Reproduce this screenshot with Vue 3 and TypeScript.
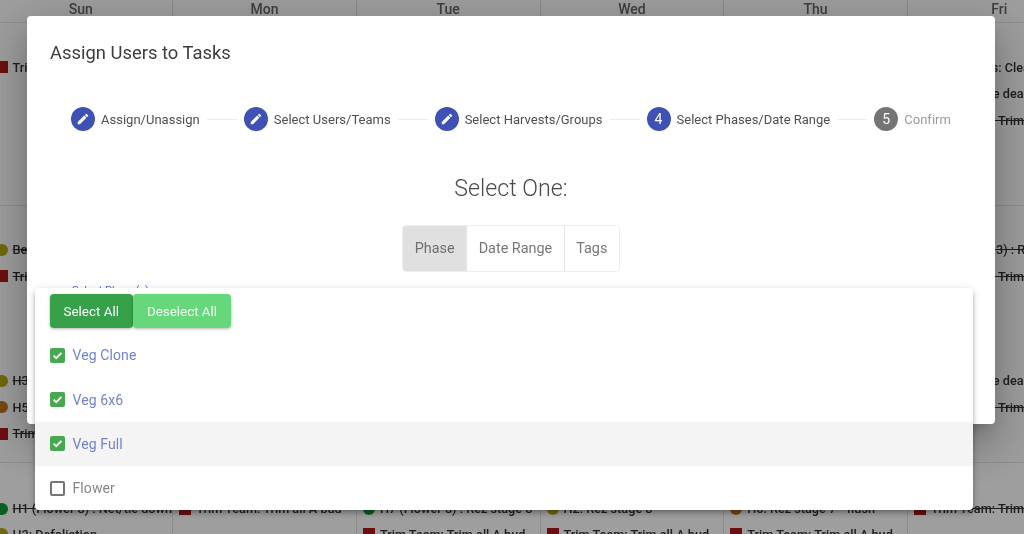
<script setup lang="ts">
type Ev = { text?: string; kind?: 'dot' | 'sq'; color?: string; strike?: boolean; gap?: boolean }
type Cell = Ev[]
const days: string[] = ['Sun', 'Mon', 'Tue', 'Wed', 'Thu', 'Fri', 'Sat']
const red = '#b0191d'
const yellow = '#b4ab12'
const green = '#0d9a33'
const orange = '#c2761a'
const weeks: { cls: string; cells: Cell[] }[] = [
  {
    cls: 'w1',
    cells: [
      [{ text: 'Trim Team: Trim all A bud', kind: 'sq', color: red }],
      [], [], [], [],
      [
        { text: 'Trim Teams: Clean', kind: 'sq', color: red },
        { text: 'H5: Remove dead leaves', kind: 'dot', color: yellow },
        { text: 'Trim Team: Trim all A bud', kind: 'sq', color: red, strike: true },
      ],
      [],
    ],
  },
  {
    cls: 'w2',
    cells: [
      [
        { text: 'Be', kind: 'dot', color: yellow, strike: true },
        { text: 'Trim Team', kind: 'sq', color: red, strike: true },
        { gap: true },
        { text: 'H3', kind: 'dot', color: yellow, strike: true },
        { text: 'H5', kind: 'dot', color: orange },
        { text: 'Trim Team', kind: 'sq', color: red, strike: true },
      ],
      [], [], [], [],
      [
        { text: 'H3 (Flower 3) : Rez', kind: 'dot', color: yellow, strike: true },
        { text: 'Trim Team: Trim all A bud', kind: 'sq', color: red, strike: true },
        { gap: true },
        { text: 'H5: Remove dead leaves', kind: 'dot', color: yellow },
        { text: 'Trim Team: Trim all A bud', kind: 'sq', color: red, strike: true },
      ],
      [],
    ],
  },
  {
    cls: 'w3',
    cells: [
      [
        { text: 'H1 (Flower 8) : Net/tie down', kind: 'dot', color: green, strike: true },
        { text: 'H2: Defoliation', kind: 'dot', color: yellow },
      ],
      [{ text: 'Trim Team: Trim all A bud', kind: 'sq', color: red, strike: true }],
      [
        { text: 'H7 (Flower 8) : Rez stage 8', kind: 'dot', color: green, strike: true },
        { text: 'Trim Team: Trim all A bud', kind: 'sq', color: red },
      ],
      [
        { text: 'H2: Rez stage 8', kind: 'dot', color: yellow },
        { text: 'Trim Team: Trim all A bud', kind: 'sq', color: red },
      ],
      [
        { text: 'H6: Rez stage 7 - flush', kind: 'dot', color: orange },
        { text: 'Trim Team: Trim all A bud', kind: 'sq', color: red },
      ],
      [{ text: 'Trim Team: Trim all A bud', kind: 'sq', color: red, strike: true }],
      [],
    ],
  },
]
const steps = [
  { label: 'Assign/Unassign', edit: true },
  { label: 'Select Users/Teams', edit: true },
  { label: 'Select Harvests/Groups', edit: true },
  { label: 'Select Phases/Date Range', n: 4 },
  { label: 'Confirm', n: 5, muted: true },
]
const phases = [
  { label: 'Veg Clone', on: true },
  { label: 'Veg 6x6', on: true },
  { label: 'Veg Full', on: true, hover: true },
  { label: 'Flower', on: false },
]
</script>

<template>
  <div class="page">
    <div class="calendar">
      <div class="head">
        <div v-for="d in days" :key="d" class="hcell">{{ d }}</div>
      </div>
      <div v-for="w in weeks" :key="w.cls" class="week" :class="w.cls">
        <div v-for="(cell, i) in w.cells" :key="i" class="cell">
          <template v-for="(e, j) in cell" :key="j">
            <div v-if="e.gap" class="gap"></div>
            <div v-else class="ev">
              <span v-if="e.kind" :class="e.kind" :style="{ background: e.color }"></span>
              <span class="evt" :class="{ strike: e.strike }">{{ e.text }}</span>
            </div>
          </template>
        </div>
      </div>
    </div>
    <div class="scrim"></div>

    <section class="modal">
      <h2 class="title">Assign Users to Tasks</h2>
      <div class="stepper">
        <template v-for="(s, i) in steps" :key="s.label">
          <div v-if="i" class="line"></div>
          <div class="step" :class="{ muted: s.muted }">
            <span class="circle">
              <svg v-if="s.edit" viewBox="0 0 24 24" width="14" height="14">
                <path fill="#fff" d="M3 17.25V21h3.75L17.81 9.94l-3.75-3.75L3 17.25zM20.71 7.04a1 1 0 0 0 0-1.41l-2.34-2.34a1 1 0 0 0-1.41 0l-1.83 1.83 3.75 3.75 1.83-1.83z" />
              </svg>
              <template v-else>{{ s.n }}</template>
            </span>
            <span class="slabel">{{ s.label }}</span>
          </div>
        </template>
      </div>
      <h3 class="sub">Select One:</h3>
      <div class="group">
        <button class="gbtn active">Phase</button>
        <button class="gbtn">Date Range</button>
        <button class="gbtn">Tags</button>
      </div>
      <div class="field">Select Phase(s)</div>
    </section>

    <div class="menu">
      <div class="actions">
        <button class="act primary">Select All</button>
        <button class="act light">Deselect All</button>
      </div>
      <div v-for="p in phases" :key="p.label" class="item" :class="{ hover: p.hover, off: !p.on }">
        <span class="box">
          <svg v-if="p.on" viewBox="0 0 15 15" width="15" height="15">
            <path d="M3.6 7.7l2.6 2.5 5.2-5.4" fill="none" stroke="#fff" stroke-width="1.8" />
          </svg>
        </span>
        <span class="ilabel">{{ p.label }}</span>
      </div>
    </div>
  </div>
</template>

<style>
html, body { margin: 0; padding: 0; overflow: hidden; }
</style>

<style scoped>
.page {
  position: relative;
  width: 1024px;
  height: 534px;
  overflow: hidden;
  background: #fff;
  font-family: Roboto, "Liberation Sans", sans-serif;
  color: #212121;
  filter: blur(0.4px);
}
.calendar { margin-left: -10.5px; width: 1286px; }
.head, .week { display: grid; grid-template-columns: repeat(7, 183.7px); }
.head { height: 22px; border-bottom: 1px solid #e4e4e4; }
.hcell {
  font-size: 14px;
  font-weight: 500;
  line-height: 19px;
  text-align: center;
  color: #666;
  border-right: 1px solid #ddd;
  box-sizing: border-box;
}
.week { border-bottom: 1px solid #e4e4e4; box-sizing: border-box; }
.w1 { height: 183px; }
.w2 { height: 257px; }
.w3 { height: 80px; border-bottom: 0; }
.cell { padding-top: 31px; border-right: 1px solid #e4e4e4; box-sizing: border-box; min-width: 0; overflow: hidden; }
.w2 .cell { padding-top: 30.5px; }
.w3 .cell { padding-top: 33px; }
.ev {
  display: flex;
  align-items: center;
  gap: 5px;
  height: 26.5px;
  padding-left: 6px;
  font-size: 12.7px;
  font-weight: 500;
  white-space: nowrap;
  color: #333;
}
.w3 .ev { height: 25.5px; }
.gap { height: 78px; }
.dot { width: 12px; height: 12px; border-radius: 50%; flex: none; }
.sq { width: 12px; height: 12px; flex: none; }
.evt.strike { text-decoration: line-through; }
.scrim { position: absolute; inset: 0; background: rgba(0, 0, 0, 0.38); }

.modal {
  position: absolute;
  left: 27px;
  top: 16px;
  width: 968px;
  height: 408px;
  box-sizing: border-box;
  padding: 23px 23px;
  background: #fff;
  border-radius: 4px;
  box-shadow: 0 11px 15px -7px rgba(0,0,0,.2), 0 24px 38px 3px rgba(0,0,0,.14), 0 9px 46px 8px rgba(0,0,0,.12);
}
.title { margin: 0; font-size: 18.4px; font-weight: 400; line-height: 27px; color: #3c3c3c; }
.stepper {
  display: flex;
  align-items: center;
  margin: 41px 0 0 21px;
  height: 24px;
  white-space: nowrap;
}
.step { display: flex; align-items: center; gap: 6px; }
.circle {
  width: 24px;
  height: 24px;
  border-radius: 50%;
  background: #3f51b5;
  color: #fff;
  font-size: 14px;
  display: flex;
  align-items: center;
  justify-content: center;
  flex: none;
}
.slabel { font-size: 13px; color: #4f4f4f; letter-spacing: 0.01px; }
.muted .circle { background: #757575; }
.muted .slabel { color: #9b9b9b; }
.line { width: 30px; height: 1px; background: #ececec; margin: 0 7px; flex: none; }
.sub {
  margin: 42px 0 0;
  font-size: 23.2px;
  font-weight: 300;
  line-height: 30px;
  text-align: center;
  color: #4a4a4a;
}
.group {
  display: flex;
  width: fit-content;
  margin: 22px auto 0;
  height: 47px;
  box-sizing: border-box;
  border: 1px solid #eeeeee;
  border-radius: 4px;
  overflow: hidden;
}
.gbtn {
  border: 0;
  background: #fff;
  padding: 0 11.5px;
  font: 400 14.4px Roboto, "Liberation Sans", sans-serif;
  color: #777;
  border-right: 1px solid #e6e6e6;
}
.gbtn:last-child { border-right: 0; }
.gbtn.active { background: #e0e0e0; width: 64px; padding: 0; color: #707070; }
.field { margin: 12px 0 0 22px; font-size: 11px; line-height: 13px; color: #5c6bc0; }

.menu {
  position: absolute;
  left: 35px;
  top: 288px;
  width: 938px;
  height: 222px;
  background: #fff;
  border-radius: 4px;
  box-shadow: 0 2px 4px -1px rgba(0,0,0,.2), 0 4px 5px rgba(0,0,0,.14), 0 1px 10px rgba(0,0,0,.12);
}
.actions { display: flex; height: 45px; padding: 6px 0 0 14.5px; box-sizing: border-box; }
.act {
  height: 34px;
  border: 0;
  border-radius: 4px;
  color: #fff;
  font: 400 13.4px Roboto, "Liberation Sans", sans-serif;
  box-shadow: 0 1px 3px rgba(0,0,0,.3);
  padding: 0;
}
.primary { background: #36a148; width: 83.5px; }
.light { background: #66d87b; width: 98px; color: #f1fdf3; }
.item {
  display: flex;
  align-items: center;
  gap: 8px;
  height: 44.4px;
  padding-left: 14.5px;
}
.item.hover { background: #f4f4f4; }
.box {
  width: 15px;
  height: 15px;
  border-radius: 2px;
  background: #47a84f;
  flex: none;
  display: flex;
}
.off .box { background: #fff; border: 2px solid #757575; box-sizing: border-box; }
.ilabel { font-size: 14px; color: #7381cf; letter-spacing: 0.1px; }
.off .ilabel { color: #858585; }
</style>
